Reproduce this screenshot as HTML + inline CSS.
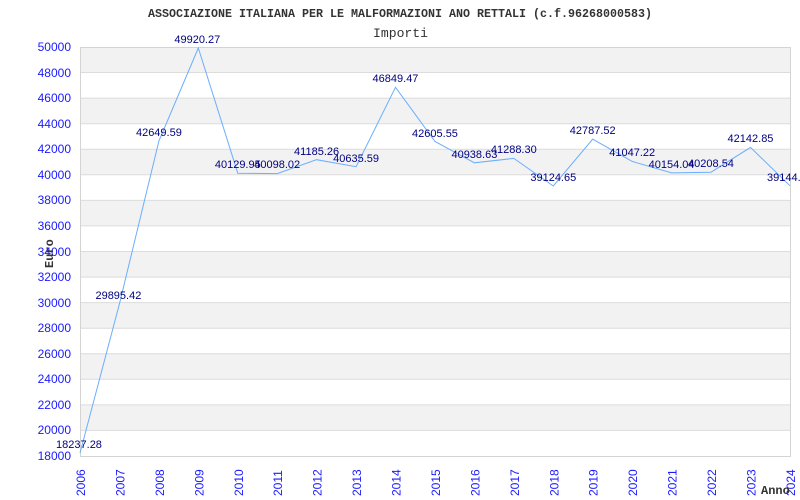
<!DOCTYPE html>
<html><head><meta charset="utf-8"><style>html,body{margin:0;padding:0;background:#fff;}svg{display:block}</style></head><body>
<svg width="800" height="500" xmlns="http://www.w3.org/2000/svg" font-family="Liberation Sans, sans-serif">
<rect width="800" height="500" fill="#fff"/>
<g fill="#f2f2f2">
<rect x="80" y="47" width="710" height="25.56"/>
<rect x="80" y="98.1" width="710" height="25.56"/>
<rect x="80" y="149.2" width="710" height="25.56"/>
<rect x="80" y="200.4" width="710" height="25.56"/>
<rect x="80" y="251.5" width="710" height="25.56"/>
<rect x="80" y="302.6" width="710" height="25.56"/>
<rect x="80" y="353.8" width="710" height="25.56"/>
<rect x="80" y="404.9" width="710" height="25.56"/>
</g>
<g stroke="#dcdcdc" stroke-width="1">
<line x1="80" x2="790" y1="72.5" y2="72.5"/><line x1="80" x2="790" y1="98.1" y2="98.1"/>
<line x1="80" x2="790" y1="123.7" y2="123.7"/><line x1="80" x2="790" y1="149.2" y2="149.2"/>
<line x1="80" x2="790" y1="174.8" y2="174.8"/><line x1="80" x2="790" y1="200.4" y2="200.4"/>
<line x1="80" x2="790" y1="225.9" y2="225.9"/><line x1="80" x2="790" y1="251.5" y2="251.5"/>
<line x1="80" x2="790" y1="277.1" y2="277.1"/><line x1="80" x2="790" y1="302.6" y2="302.6"/>
<line x1="80" x2="790" y1="328.2" y2="328.2"/><line x1="80" x2="790" y1="353.8" y2="353.8"/>
<line x1="80" x2="790" y1="379.3" y2="379.3"/><line x1="80" x2="790" y1="404.9" y2="404.9"/>
<line x1="80" x2="790" y1="430.4" y2="430.4"/>
</g>
<rect x="80.5" y="47.5" width="710" height="409" fill="none" stroke="#d4d4d4"/>
<g fill="#1a1aff" font-size="12" text-anchor="end">
<text x="71" y="51">50000</text><text x="71" y="77">48000</text><text x="71" y="102">46000</text>
<text x="71" y="128">44000</text><text x="71" y="153">42000</text><text x="71" y="179">40000</text>
<text x="71" y="204">38000</text><text x="71" y="230">36000</text><text x="71" y="256">34000</text>
<text x="71" y="281">32000</text><text x="71" y="307">30000</text><text x="71" y="332">28000</text>
<text x="71" y="358">26000</text><text x="71" y="383">24000</text><text x="71" y="409">22000</text>
<text x="71" y="434">20000</text><text x="71" y="460">18000</text>
</g>
<g fill="#1a1aff" font-size="12">
<text transform="translate(85,496) rotate(-90)">2006</text>
<text transform="translate(124.4,496) rotate(-90)">2007</text>
<text transform="translate(163.9,496) rotate(-90)">2008</text>
<text transform="translate(203.3,496) rotate(-90)">2009</text>
<text transform="translate(242.8,496) rotate(-90)">2010</text>
<text transform="translate(282.2,496) rotate(-90)">2011</text>
<text transform="translate(321.6,496) rotate(-90)">2012</text>
<text transform="translate(361.1,496) rotate(-90)">2013</text>
<text transform="translate(400.5,496) rotate(-90)">2014</text>
<text transform="translate(440,496) rotate(-90)">2015</text>
<text transform="translate(479.4,496) rotate(-90)">2016</text>
<text transform="translate(518.8,496) rotate(-90)">2017</text>
<text transform="translate(558.3,496) rotate(-90)">2018</text>
<text transform="translate(597.7,496) rotate(-90)">2019</text>
<text transform="translate(637.2,496) rotate(-90)">2020</text>
<text transform="translate(676.6,496) rotate(-90)">2021</text>
<text transform="translate(716,496) rotate(-90)">2022</text>
<text transform="translate(755.5,496) rotate(-90)">2023</text>
<text transform="translate(794.9,496) rotate(-90)">2024</text>
</g>
<polyline fill="none" stroke="#6aaeff" stroke-width="1" points="80,453 119.4,304 158.9,141 198.3,48 237.8,173.2 277.2,173.6 316.6,159.7 356.1,166.7 395.5,87.3 435,141.5 474.4,162.8 513.8,158.4 553.3,186 592.7,139.2 632.2,161.4 671.6,172.9 711,172.2 750.5,147.4 790,185.8"/>
<g fill="#000080" font-size="11" text-anchor="middle">
<text x="79" y="448">18237.28</text>
<text x="118.4" y="299">29895.42</text>
<text x="158.9" y="136">42649.59</text>
<text x="197.3" y="43">49920.27</text>
<text x="237.8" y="168">40129.95</text>
<text x="277.2" y="168">40098.02</text>
<text x="316.6" y="155">41185.26</text>
<text x="356.1" y="162">40635.59</text>
<text x="395.5" y="82">46849.47</text>
<text x="435" y="137">42605.55</text>
<text x="474.4" y="158">40938.63</text>
<text x="513.8" y="153">41288.30</text>
<text x="553.3" y="181">39124.65</text>
<text x="592.7" y="134">42787.52</text>
<text x="632.2" y="156">41047.22</text>
<text x="671.6" y="168">40154.04</text>
<text x="711" y="167">40208.54</text>
<text x="750.5" y="142">42142.85</text>
<text x="790" y="181">39144.21</text>
</g>
<g font-family="Liberation Mono, monospace" fill="#333">
<text x="148" y="17" font-size="12" font-weight="bold" textLength="504" lengthAdjust="spacingAndGlyphs">ASSOCIAZIONE ITALIANA PER LE MALFORMAZIONI ANO RETTALI (c.f.96268000583)</text>
<text x="373" y="37" font-size="13" textLength="55" lengthAdjust="spacingAndGlyphs">Importi</text>
<text transform="translate(53,268) rotate(-90)" font-size="12" font-weight="bold">Euro</text>
<text x="761" y="494" font-size="12" font-weight="bold">Anno</text>
</g>
</svg>
</body></html>
